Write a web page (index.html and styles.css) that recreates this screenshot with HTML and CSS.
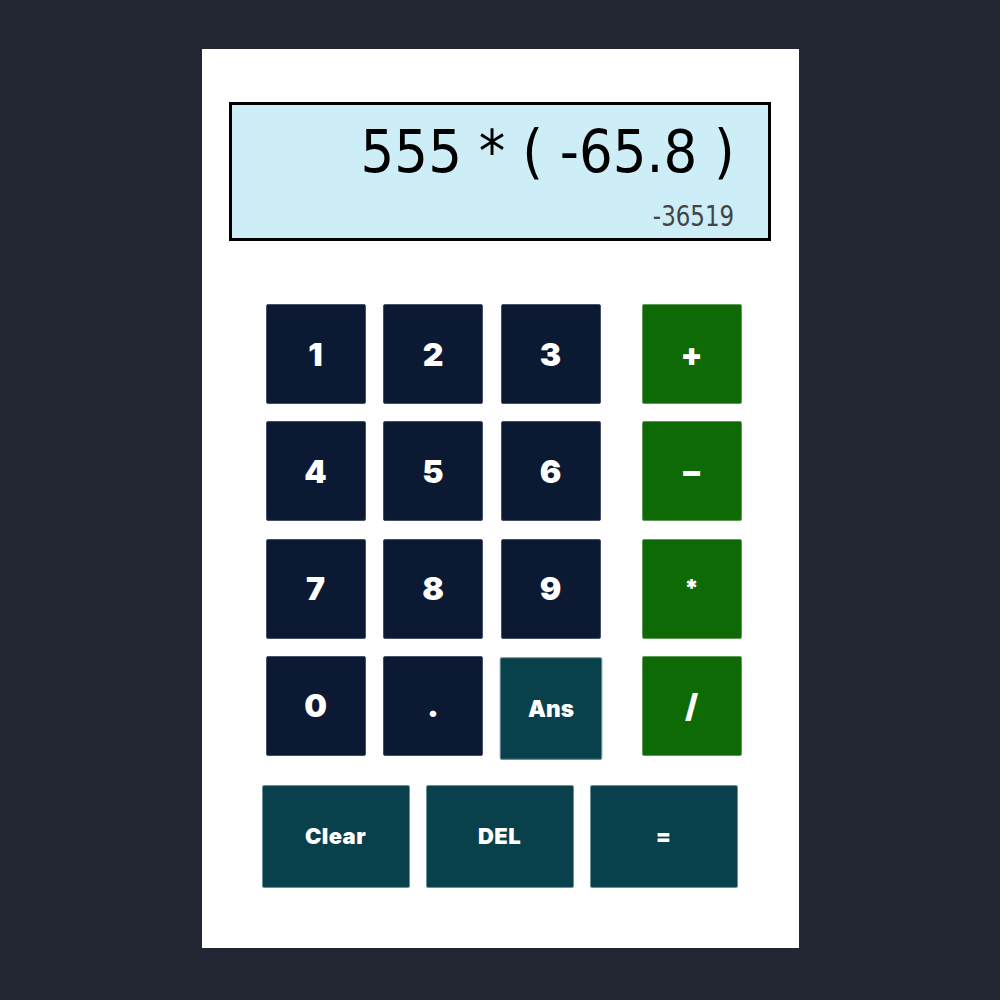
FILE: index.html
```html
<!DOCTYPE html>
<html lang="en">
<head>
<meta charset="utf-8">
<title>Calculator</title>
<link rel="stylesheet" href="styles.css">
</head>
<body>
<div class="stage">
  <div class="calc">
    <div class="display">
      <div class="expr">555 * ( -65.8 )</div>
      <div class="result">-36519</div>
    </div>
    <div class="keypad">
      <button class="key num">1</button>
      <button class="key num">2</button>
      <button class="key num">3</button>
      <button class="key op">+</button>
      <button class="key num">4</button>
      <button class="key num">5</button>
      <button class="key num">6</button>
      <button class="key op">&minus;</button>
      <button class="key num">7</button>
      <button class="key num">8</button>
      <button class="key num">9</button>
      <button class="key op small">*</button>
      <button class="key num">0</button>
      <button class="key num">.</button>
      <button class="key fn ans">Ans</button>
      <button class="key op">/</button>
    </div>
    <div class="bottom">
      <button class="key fn wide">Clear</button>
      <button class="key fn wide">DEL</button>
      <button class="key fn wide">=</button>
    </div>
  </div>
</div>
</body>
</html>
```

FILE: styles.css
```css
html, body {
  margin: 0;
  padding: 0;
  background: #222633;
}
.stage {
  width: 1000px;
  height: 1000px;
  display: flex;
  justify-content: center;
  padding-top: 49px;
  box-sizing: border-box;
}
.calc {
  width: 597px;
  height: 899px;
  background: #ffffff;
  box-sizing: border-box;
  padding-top: 53px;
  display: flex;
  flex-direction: column;
}
.display {
  margin: 0 28px 0 27px;
  height: 139px;
  box-sizing: border-box;
  border: 3px solid #000;
  background: #cdedf7;
  display: flex;
  flex-direction: column;
  align-items: flex-end;
  padding-right: 33px;
}
.expr {
  font-family: "DejaVu Sans", sans-serif;
  font-size: 59px;
  line-height: 59px;
  margin-top: 17px;
  color: #000;
  white-space: pre;
  transform: scaleX(0.9);
  transform-origin: right center;
}
.result {
  font-family: "DejaVu Sans", sans-serif;
  font-size: 28px;
  line-height: 28px;
  margin-top: 22px;
  color: #444;
  transform: scaleX(0.82);
  transform-origin: right center;
}
.keypad {
  margin-top: 63px;
  padding-left: 64px;
  display: grid;
  grid-template-columns: 100px 100px 100px 123.5px;
  grid-template-rows: repeat(4, 100px);
  column-gap: 17.5px;
  row-gap: 17.33px;
}
.key {
  font-family: "Inter", "Open Sans", sans-serif;
  font-weight: 900;
  color: #fff;
  border: 1px solid #8a93a0;
  border-radius: 2px;
  margin: 0;
  padding: 0;
  display: flex;
  align-items: center;
  justify-content: center;
}
.num {
  width: 100px;
  height: 100px;
  background: #0b1a32;
  border-color: #45506a;
  font-size: 32px;
}
.op {
  width: 100px;
  height: 100px;
  justify-self: end;
  background: #0e6a04;
  border-color: #5d9a57;
  font-size: 32px;
}
.op.small {
  font-size: 24px;
}
.fn {
  background: #08404b;
  border-color: #6b9198;
}
.ans {
  width: 100px;
  height: 100px;
  font-size: 22px;
  transform: translateY(2.6px) scale(1.026);
}
.bottom {
  margin-top: 29px;
  padding-left: 60px;
  display: flex;
  gap: 16px;
}
.wide {
  width: 148px;
  height: 103px;
  font-size: 22px;
  letter-spacing: 0.4px;
}
```
